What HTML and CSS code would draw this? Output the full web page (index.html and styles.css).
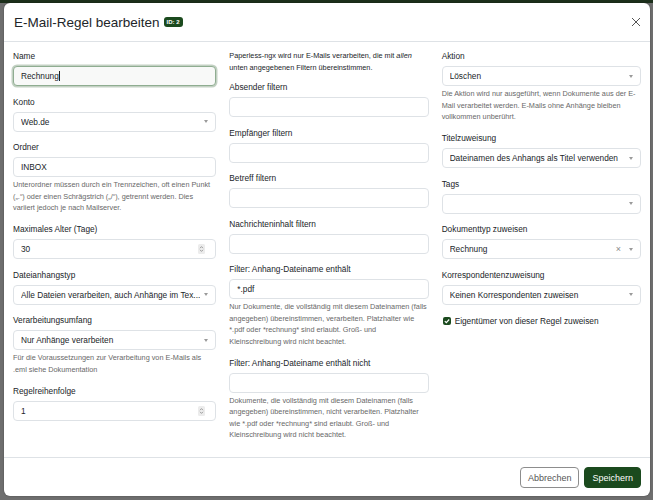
FILE: index.html
```html
<!DOCTYPE html>
<html lang="de">
<head>
<meta charset="utf-8">
<title>E-Mail-Regel bearbeiten</title>
<link rel="stylesheet" href="styles.css">
</head>
<body>
<div class="page">
  <div class="modal">
    <div class="modal-header">
      <h5 class="modal-title">E-Mail-Regel bearbeiten <span class="badge">ID: 2</span></h5>
      <button class="btn-close" aria-label="Schließen">
        <svg width="10" height="10" viewBox="0 0 10 10"><path d="M1 1 L9 9 M9 1 L1 9" stroke="#555" stroke-width="1" fill="none"/></svg>
      </button>
    </div>
    <div class="modal-body">
      <div class="col">
        <div class="field">
          <label>Name</label>
          <div class="control focus">Rechnung<span class="caret"></span></div>
        </div>
        <div class="field">
          <label>Konto</label>
          <div class="control select"><span class="val">Web.de</span><span class="arrow"></span></div>
        </div>
        <div class="field">
          <label>Ordner</label>
          <div class="control">INBOX</div>
          <div class="help">Unterordner müssen durch ein Trennzeichen, oft einen Punkt<br>(„.“) oder einen Schrägstrich („/“), getrennt werden. Dies<br>variiert jedoch je nach Mailserver.</div>
        </div>
        <div class="field">
          <label>Maximales Alter (Tage)</label>
          <div class="control number"><span class="val">30</span><svg class="spin" width="7" height="10" viewBox="0 0 7 10"><rect width="7" height="10" rx="1.5" fill="#ececec"/><path d="M2 4.2 L3.5 2.6 L5 4.2 M2 5.8 L3.5 7.4 L5 5.8" stroke="#8a8a8a" stroke-width=".8" fill="none"/></svg></div>
        </div>
        <div class="field">
          <label>Dateianhangstyp</label>
          <div class="control select"><span class="val">Alle Dateien verarbeiten, auch Anhänge im Tex...</span><span class="arrow"></span></div>
        </div>
        <div class="field">
          <label>Verarbeitungsumfang</label>
          <div class="control select"><span class="val">Nur Anhänge verarbeiten</span><span class="arrow"></span></div>
          <div class="help">Für die Voraussetzungen zur Verarbeitung von E-Mails als<br>.eml siehe Dokumentation</div>
        </div>
        <div class="field">
          <label>Regelreihenfolge</label>
          <div class="control number"><span class="val">1</span><svg class="spin" width="7" height="10" viewBox="0 0 7 10"><rect width="7" height="10" rx="1.5" fill="#ececec"/><path d="M2 4.2 L3.5 2.6 L5 4.2 M2 5.8 L3.5 7.4 L5 5.8" stroke="#8a8a8a" stroke-width=".8" fill="none"/></svg></div>
        </div>
      </div>

      <div class="col">
        <p class="intro">Paperless-ngx wird nur E-Mails verarbeiten, die mit <em>allen</em><br>unten angegebenen Filtern übereinstimmen.</p>
        <div class="field">
          <label>Absender filtern</label>
          <div class="control"></div>
        </div>
        <div class="field">
          <label>Empfänger filtern</label>
          <div class="control"></div>
        </div>
        <div class="field">
          <label>Betreff filtern</label>
          <div class="control"></div>
        </div>
        <div class="field">
          <label>Nachrichteninhalt filtern</label>
          <div class="control"></div>
        </div>
        <div class="field">
          <label>Filter: Anhang-Dateiname enthält</label>
          <div class="control">*.pdf</div>
          <div class="help">Nur Dokumente, die vollständig mit diesem Dateinamen (falls<br>angegeben) übereinstimmen, verarbeiten. Platzhalter wie<br>*.pdf oder *rechnung* sind erlaubt. Groß- und<br>Kleinschreibung wird nicht beachtet.</div>
        </div>
        <div class="field">
          <label>Filter: Anhang-Dateiname enthält nicht</label>
          <div class="control"></div>
          <div class="help">Dokumente, die vollständig mit diesem Dateinamen (falls<br>angegeben) übereinstimmen, nicht verarbeiten. Platzhalter<br>wie *.pdf oder *rechnung* sind erlaubt. Groß- und<br>Kleinschreibung wird nicht beachtet.</div>
        </div>
      </div>

      <div class="col">
        <div class="field">
          <label>Aktion</label>
          <div class="control select"><span class="val">Löschen</span><span class="arrow"></span></div>
          <div class="help">Die Aktion wird nur ausgeführt, wenn Dokumente aus der E-<br>Mail verarbeitet werden. E-Mails ohne Anhänge bleiben<br>vollkommen unberührt.</div>
        </div>
        <div class="field">
          <label>Titelzuweisung</label>
          <div class="control select"><span class="val">Dateinamen des Anhangs als Titel verwenden</span><span class="arrow"></span></div>
        </div>
        <div class="field">
          <label>Tags</label>
          <div class="control select"><span class="val"></span><span class="arrow"></span></div>
        </div>
        <div class="field">
          <label>Dokumenttyp zuweisen</label>
          <div class="control select"><span class="val">Rechnung</span><span class="clear">×</span><span class="arrow"></span></div>
        </div>
        <div class="field">
          <label>Korrespondentenzuweisung</label>
          <div class="control select"><span class="val">Keinen Korrespondenten zuweisen</span><span class="arrow"></span></div>
        </div>
        <div class="check-row">
          <span class="checkbox"><svg width="8" height="8" viewBox="0 0 8 8"><path d="M1.8 4.1 L3.3 5.6 L6.2 2.5" stroke="#fff" stroke-width="1.2" fill="none"/></svg></span>
          <span>Eigentümer von dieser Regel zuweisen</span>
        </div>
      </div>
    </div>
    <div class="modal-footer">
      <button class="btn btn-outline">Abbrechen</button>
      <button class="btn btn-primary">Speichern</button>
    </div>
  </div>
</div>
</body>
</html>
```

FILE: styles.css
```css
* {
  box-sizing: border-box;
}

html,
body {
  margin: 0;
  padding: 0;
}

body {
  font-family: "Liberation Sans", Arial, sans-serif;
  color: #212529;
  background: #6e6e6e;
}

.page {
  height: 500px;
  padding: 3px 3px 4px 4px;
  background: linear-gradient(#1c2f1b 0, #1c2f1b 3px, #6e6e6e 3px);
}

.modal {
  height: 493px;
  background: #fff;
  border-radius: 6px;
  display: flex;
  flex-direction: column;
  overflow: hidden;
  box-shadow: 0 0 2px rgba(0, 0, 0, 0.35);
}

.modal-header {
  flex: none;
  height: 39px;
  display: flex;
  align-items: center;
  justify-content: space-between;
  padding: 0 7px 0 10px;
  border-bottom: 1px solid #dee2e6;
}

.modal-title {
  margin: 0;
  font-size: 13.5px;
  font-weight: 400;
  display: flex;
  align-items: center;
  gap: 4px;
}

.badge {
  background: #1b4a1e;
  color: #fff;
  font-size: 6px;
  line-height: 6px;
  font-weight: 700;
  padding: 2px 3px;
  border-radius: 3px;
}

.btn-close {
  border: 0;
  background: transparent;
  padding: 2px;
  display: flex;
}

.modal-body {
  flex: 1;
  min-height: 0;
  padding: 8px 9px 0;
  display: grid;
  grid-template-columns: repeat(3, 1fr);
  column-gap: 13px;
  align-items: start;
}

.field {
  margin-bottom: 9.5px;
}

.field label {
  display: block;
  font-size: 8.3px;
  line-height: 12px;
  margin-bottom: 4px;
}

.control {
  height: 20px;
  border: 1px solid #dee2e6;
  border-radius: 4px;
  background: #fff;
  font-size: 8.3px;
  padding: 0 6px 0 7px;
  display: flex;
  align-items: center;
  white-space: nowrap;
}

.control.focus {
  border-color: #8fad91;
  box-shadow: 0 0 0 1.5px #c3d1c3;
  background: #f8f9f8;
}

.caret {
  display: inline-block;
  width: 1px;
  height: 10px;
  background: #222;
  margin-left: 0.5px;
}

.val {
  flex: 1;
  overflow: hidden;
}

.arrow {
  width: 0;
  height: 0;
  border-left: 2.5px solid transparent;
  border-right: 2.5px solid transparent;
  border-top: 3px solid #9a9a9a;
  margin-left: 4px;
  margin-right: 1px;
}

.clear {
  color: #8a8a8a;
  font-size: 9px;
  margin-right: 4px;
}

.number {
  padding-right: 10px;
}

.help {
  font-size: 7.3px;
  line-height: 11.5px;
  color: #686868;
  margin-top: 2px;
  white-space: nowrap;
}

.intro {
  font-size: 7.3px;
  line-height: 11.5px;
  margin: 0 0 8px;
  white-space: nowrap;
}

.check-row {
  display: flex;
  align-items: center;
  gap: 4px;
  font-size: 8.3px;
  height: 14px;
  padding-left: 1px;
}

.checkbox {
  width: 8px;
  height: 8px;
  border-radius: 2px;
  background: #1b4a1e;
  display: flex;
}

.modal-footer {
  flex: none;
  border-top: 1px solid #dee2e6;
  padding: 9px 9px 8px;
  display: flex;
  justify-content: flex-end;
  gap: 5px;
}

.btn {
  height: 21px;
  font-family: inherit;
  font-size: 9px;
  padding: 0 7px;
  border-radius: 4px;
}

.btn-outline {
  background: #fff;
  border: 1px solid #8d8d8d;
  color: #555;
}

.btn-primary {
  background: #1b4a1e;
  border: 1px solid #1b4a1e;
  color: #fff;
}
```
